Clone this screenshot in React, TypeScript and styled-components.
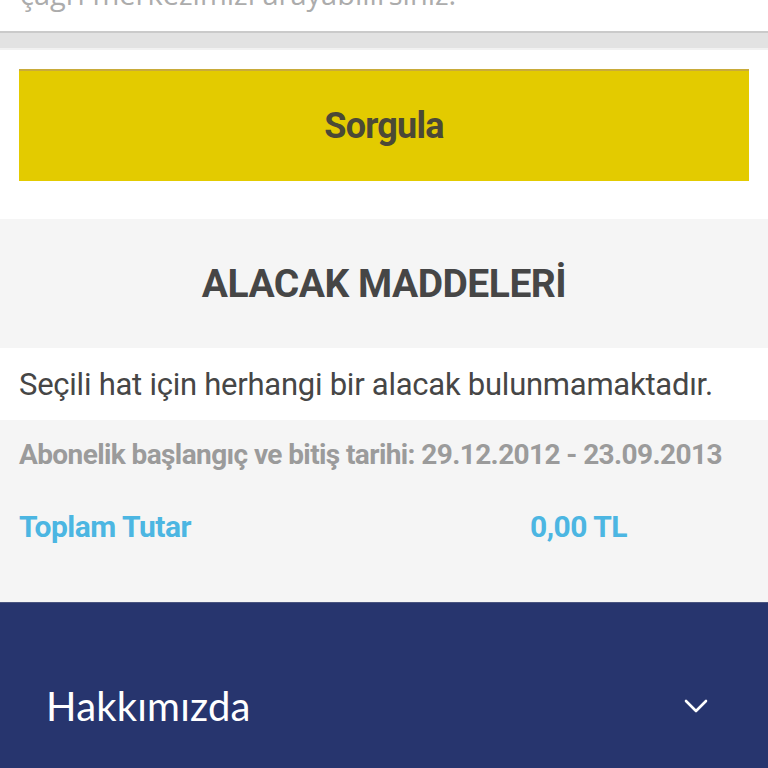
import React from "react";
import styled, { createGlobalStyle } from "styled-components";

const Global = createGlobalStyle`
  html, body { margin: 0; padding: 0; background: #ffffff; }
  body { font-family: Roboto, "Noto Sans", sans-serif; }
  * { box-sizing: border-box; }
`;

const Page = styled.div`
  width: 768px;
  display: flex;
  flex-direction: column;
`;

const TopNote = styled.div`
  height: 31px;
  overflow: hidden;
  display: flex;
  align-items: flex-end;
  padding: 0 20px 23px;
  background: #fff;
`;

const TopText = styled.span`
  font-family: "Open Sans", sans-serif;
  font-size: 29px;
  line-height: 29px;
  color: #acacac;
  white-space: nowrap;
`;

const Divider = styled.div`
  height: 19px;
  background: #e2e2e2;
  border-top: 2px solid #cacaca;
  border-bottom: 2px solid #f1f1f1;
`;

const ButtonWrap = styled.div`
  padding: 19px 19px 38px;
  background: #fff;
`;

const QueryButton = styled.button`
  width: 100%;
  height: 112px;
  border: none;
  border-top: 2px solid #c9ab3a;
  background: #e3cb00;
  color: #4b4936;
  font-family: Roboto, sans-serif;
  font-weight: 700;
  font-size: 36px;
  letter-spacing: -0.8px;
  display: flex;
  align-items: center;
  justify-content: center;
  padding: 0;
`;

const Section = styled.div<{ $bg: string; $h: number }>`
  background: ${(p) => p.$bg};
  height: ${(p) => p.$h}px;
  display: flex;
  flex-direction: column;
  justify-content: center;
  padding: 0 19px;
`;

const Title = styled.h2`
  margin: 0;
  text-align: center;
  font-family: Roboto, sans-serif;
  font-weight: 700;
  font-size: 39px;
  letter-spacing: -0.5px;
  color: #464646;
`;

const Message = styled.p`
  margin: 0;
  font-family: Roboto, sans-serif;
  font-size: 31px;
  letter-spacing: -0.25px;
  color: #464646;
`;

const Summary = styled.div`
  background: #f5f5f5;
  height: 182px;
  padding: 16px 19px 0;
  display: flex;
  flex-direction: column;
`;

const DateLine = styled.div`
  font-family: Roboto, sans-serif;
  font-weight: 700;
  font-size: 28px;
  letter-spacing: -0.6px;
  color: #9b9b9b;
  height: 38px;
  line-height: 38px;
  white-space: nowrap;
`;

const TotalRow = styled.div`
  display: grid;
  grid-template-columns: 511px 1fr;
  margin-top: 34px;
  height: 38px;
  line-height: 38px;
  font-family: Roboto, sans-serif;
  font-weight: 700;
  font-size: 30px;
  letter-spacing: -0.5px;
  color: #4cb6e2;
`;

const Footer = styled.div`
  background: #27356e;
  height: 166px;
  border-top: 1px solid #4a5580;
  display: flex;
  align-items: center;
  justify-content: space-between;
  padding: 40px 60px 0 46px;
`;

const FooterTitle = styled.span`
  font-family: Lato, sans-serif;
  font-size: 40px;
  color: #ffffff;
  letter-spacing: 0.2px;
`;

const Chevron = () => (
  <svg width="24" height="14" viewBox="0 0 24 14" fill="none">
    <path d="M2 2 L12 12 L22 2" stroke="#fff" strokeWidth="2.6" strokeLinecap="round" strokeLinejoin="round" />
  </svg>
);

export default function App() {
  return (
    <Page>
      <Global />
      <TopNote>
        <TopText>çağrı merkezimizi arayabilirsiniz.</TopText>
      </TopNote>
      <Divider />
      <ButtonWrap>
        <QueryButton>Sorgula</QueryButton>
      </ButtonWrap>
      <Section $bg="#f5f5f5" $h={129}>
        <Title>ALACAK MADDELERİ</Title>
      </Section>
      <Section $bg="#ffffff" $h={72}>
        <Message>Seçili hat için herhangi bir alacak bulunmamaktadır.</Message>
      </Section>
      <Summary>
        <DateLine>Abonelik başlangıç ve bitiş tarihi: 29.12.2012 - 23.09.2013</DateLine>
        <TotalRow>
          <span>Toplam Tutar</span>
          <span>0,00 TL</span>
        </TotalRow>
      </Summary>
      <Footer>
        <FooterTitle>Hakkımızda</FooterTitle>
        <Chevron />
      </Footer>
    </Page>
  );
}
